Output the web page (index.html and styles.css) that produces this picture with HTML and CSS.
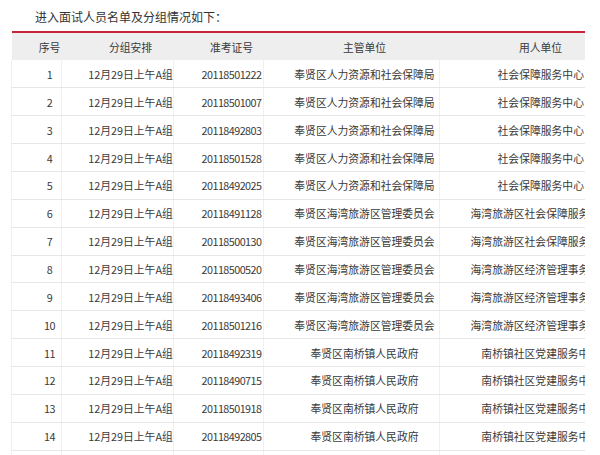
FILE: index.html
```html
<!DOCTYPE html>
<html lang="zh-CN">
<head>
<meta charset="utf-8">
<link rel="stylesheet" href="styles.css">
</head>
<body>
<div class="title">进入面试人员名单及分组情况如下：</div>
<div class="wrap">
<table class="list">
<colgroup>
<col class="c1"><col class="c2"><col class="c3"><col class="c4"><col class="c5">
</colgroup>
<thead>
<tr><th>序号</th><th>分组安排</th><th>准考证号</th><th>主管单位</th><th>用人单位</th></tr>
</thead>
<tbody>
<tr><td class="num">1</td><td>12月29日上午A组</td><td class="num">20118501222</td><td>奉贤区人力资源和社会保障局</td><td>社会保障服务中心</td></tr>
<tr><td class="num">2</td><td>12月29日上午A组</td><td class="num">20118501007</td><td>奉贤区人力资源和社会保障局</td><td>社会保障服务中心</td></tr>
<tr><td class="num">3</td><td>12月29日上午A组</td><td class="num">20118492803</td><td>奉贤区人力资源和社会保障局</td><td>社会保障服务中心</td></tr>
<tr><td class="num">4</td><td>12月29日上午A组</td><td class="num">20118501528</td><td>奉贤区人力资源和社会保障局</td><td>社会保障服务中心</td></tr>
<tr><td class="num">5</td><td>12月29日上午A组</td><td class="num">20118492025</td><td>奉贤区人力资源和社会保障局</td><td>社会保障服务中心</td></tr>
<tr><td class="num">6</td><td>12月29日上午A组</td><td class="num">20118491128</td><td>奉贤区海湾旅游区管理委员会</td><td>海湾旅游区社会保障服务中心</td></tr>
<tr><td class="num">7</td><td>12月29日上午A组</td><td class="num">20118500130</td><td>奉贤区海湾旅游区管理委员会</td><td>海湾旅游区社会保障服务中心</td></tr>
<tr><td class="num">8</td><td>12月29日上午A组</td><td class="num">20118500520</td><td>奉贤区海湾旅游区管理委员会</td><td>海湾旅游区经济管理事务中心</td></tr>
<tr><td class="num">9</td><td>12月29日上午A组</td><td class="num">20118493406</td><td>奉贤区海湾旅游区管理委员会</td><td>海湾旅游区经济管理事务中心</td></tr>
<tr><td class="num">10</td><td>12月29日上午A组</td><td class="num">20118501216</td><td>奉贤区海湾旅游区管理委员会</td><td>海湾旅游区经济管理事务中心</td></tr>
<tr><td class="num">11</td><td>12月29日上午A组</td><td class="num">20118492319</td><td>奉贤区南桥镇人民政府</td><td>南桥镇社区党建服务中心</td></tr>
<tr><td class="num">12</td><td>12月29日上午A组</td><td class="num">20118490715</td><td>奉贤区南桥镇人民政府</td><td>南桥镇社区党建服务中心</td></tr>
<tr><td class="num">13</td><td>12月29日上午A组</td><td class="num">20118501918</td><td>奉贤区南桥镇人民政府</td><td>南桥镇社区党建服务中心</td></tr>
<tr><td class="num">14</td><td>12月29日上午A组</td><td class="num">20118492805</td><td>奉贤区南桥镇人民政府</td><td>南桥镇社区党建服务中心</td></tr>
<tr><td class="num">15</td><td>12月29日上午A组</td><td class="num">20118500811</td><td>奉贤区南桥镇人民政府</td><td>南桥镇社区党建服务中心</td></tr>
</tbody>
</table>
</div>
</body>
</html>
```

FILE: styles.css
```css
html, body {
  margin: 0;
  padding: 0;
  background: #ffffff;
}
body {
  font-family: "Noto Sans CJK SC", "Liberation Sans", sans-serif;
  color: #3a3a3a;
  width: 600px;
  height: 455px;
  overflow: hidden;
}
.title {
  height: 31px;
  box-sizing: border-box;
  padding: 9px 0 0 35px;
  font-size: 12px;
  line-height: 16px;
  color: #333;
}
.wrap {
  margin-left: 11px;
  width: 574px;
  overflow: hidden;
}
.list {
  width: 604px;
  border-collapse: collapse;
  table-layout: fixed;
  font-size: 10.8px;
}
.c1 { width: 50px; }
.c2 { width: 112px; }
.c3 { width: 90px; }
.c4 { width: 176px; }
.c5 { width: 176px; }
.list thead tr {
  height: 28px;
}
.list th {
  background: #eeeeee;
  border-top: 2px solid #c7243a;
  font-weight: normal;
  padding: 0 0 0 26px;
  text-align: center;
  white-space: nowrap;
  overflow: hidden;
  color: #3a3a3a;
}
.list tbody tr {
  height: 27.86px;
}
.list td {
  padding: 0 0 0 26px;
  text-align: center;
  white-space: nowrap;
  overflow: hidden;
  border-bottom: 1px solid #e6e6e6;
  border-left: 1px solid #f0f0f0;
}
.list td.num {
  letter-spacing: -0.55px;
}
```
